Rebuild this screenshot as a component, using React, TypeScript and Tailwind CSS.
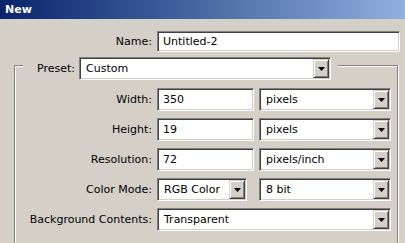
import React from 'react';

const FONT = { fontFamily: '"DejaVu Sans", Verdana, sans-serif' };

function Arrow() {
  return (
    <svg width="7" height="4" viewBox="0 0 7 4">
      <polygon points="0,0 7,0 3.5,4" fill="#000" />
    </svg>
  );
}

function TextBox({ value, className }: { value: string; className: string }) {
  return (
    <div
      className={`flex items-center bg-white border border-t-[#808080] border-l-[#808080] border-b-white border-r-white shadow-[inset_1px_1px_0_#404040,inset_-1px_-1px_0_#d4d0c8] pl-[5px] ${className}`}
    >
      {value}
    </div>
  );
}

function Select({ value, className }: { value: string; className: string }) {
  return (
    <div
      className={`flex items-stretch bg-white border border-t-[#808080] border-l-[#808080] border-b-white border-r-white shadow-[inset_1px_1px_0_#404040,inset_-1px_-1px_0_#d4d0c8] p-[1px] ${className}`}
    >
      <div className="flex-1 flex items-center pl-[5px] truncate">{value}</div>
      <div className="w-[16px] flex items-center justify-center bg-[#d4d0c8] border border-t-[#d4d0c8] border-l-[#d4d0c8] border-b-[#404040] border-r-[#404040] shadow-[inset_1px_1px_0_#fff,inset_-1px_-1px_0_#808080]">
        <Arrow />
      </div>
    </div>
  );
}

function Row({ label, children }: { label: string; children: React.ReactNode }) {
  return (
    <div className="flex items-center h-[23px]">
      <div className="w-[137px] text-right">{label}</div>
      <div className="flex items-center ml-[5px]">{children}</div>
    </div>
  );
}

export default function App() {
  return (
    <div
      className="w-[405px] h-[243px] overflow-hidden bg-[#d4d0c8] text-[11px] text-black leading-none"
      style={FONT}
    >
      <div className="h-[19px] flex items-center pl-[5px] bg-gradient-to-r from-[#0a246a] to-[#90b0de] text-white font-bold">
        New
      </div>

      <div className="flex items-center h-[21px] mt-[12px]">
        <div className="w-[152px] text-right">Name:</div>
        <TextBox value="Untitled-2" className="ml-[5px] w-[243px] h-[21px]" />
      </div>

      <div className="mt-[13px] ml-[14px] w-[384px] h-[200px] border border-b-0 border-[#808080] shadow-[inset_1px_1px_0_#fff,1px_0_0_#fff]">
        <div className="-mt-[9px] ml-[8px] w-[315px] flex items-center h-[23px] bg-[#d4d0c8] pl-[14px]">
          <span>Preset:</span>
          <Select value="Custom" className="ml-[4px] w-[252px] h-[23px]" />
        </div>

        <div className="flex flex-col gap-[7px] mt-[8px]">
          <Row label="Width:">
            <TextBox value="350" className="w-[97px] h-[23px]" />
            <Select value="pixels" className="ml-[5px] w-[132px] h-[23px]" />
          </Row>
          <Row label="Height:">
            <TextBox value="19" className="w-[97px] h-[23px]" />
            <Select value="pixels" className="ml-[5px] w-[132px] h-[23px]" />
          </Row>
          <Row label="Resolution:">
            <TextBox value="72" className="w-[97px] h-[23px]" />
            <Select value="pixels/inch" className="ml-[5px] w-[132px] h-[23px]" />
          </Row>
          <Row label="Color Mode:">
            <Select value="RGB Color" className="w-[90px] h-[23px]" />
            <Select value="8 bit" className="ml-[12px] w-[132px] h-[23px]" />
          </Row>
          <Row label="Background Contents:">
            <Select value="Transparent" className="w-[234px] h-[23px]" />
          </Row>
        </div>
      </div>
    </div>
  );
}
